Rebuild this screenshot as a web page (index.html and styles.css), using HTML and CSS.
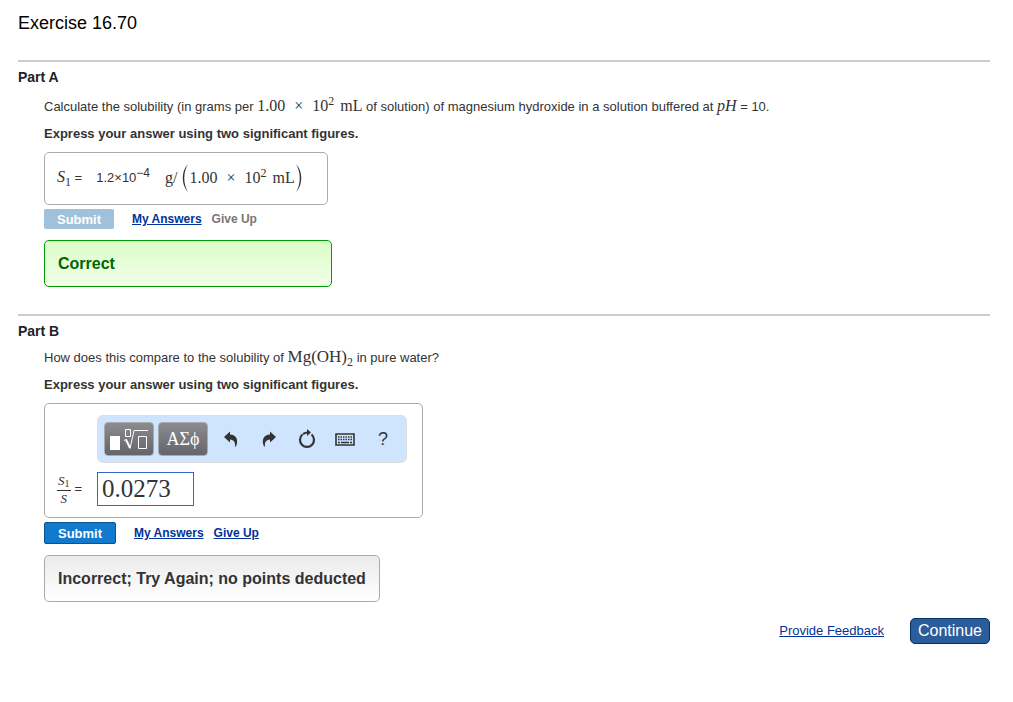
FILE: index.html
```html
<!DOCTYPE html>
<html lang="en">
<head>
    <meta charset="UTF-8">
    <title>Exercise 16.70</title>
    <link rel="stylesheet" href="styles.css">
</head>
<body>
    <h1 class="title">Exercise 16.70</h1>

    <section class="part">
        <h2 class="part-title">Part A</h2>
        <div class="part-body">
            <p class="question with-exponent">Calculate the solubility (in grams per <span class="math">1.00<span class="times">×</span>10<sup>2</sup><span class="unit">mL</span></span> of solution) of magnesium hydroxide in a solution buffered at <i class="math">pH</i> = 10.</p>
            <p class="instructions">Express your answer using two significant figures.</p>
            <div class="answer answer-done">
                <span><span class="math"><i>S</i><sub>1</sub></span> =</span>
                <span class="value">1.2×10<sup>−4</sup></span>
                <span class="math units"><span class="per">g/</span><svg class="paren" viewBox="0 0 8 30"><path d="M7 1C0 8 0 22 7 29C2 21 2 9 7 1Z"/></svg><span>1.00<span class="times">×</span>10<sup>2</sup><span class="unit">mL</span></span><svg class="paren" viewBox="0 0 8 30"><path d="M1 1C8 8 8 22 1 29C6 21 6 9 1 1Z"/></svg></span>
            </div>
            <div class="actions">
                <button class="submit" disabled>Submit</button>
                <a href="#">My Answers</a>
                <span class="disabled-link">Give Up</span>
            </div>
            <div class="feedback correct">Correct</div>
        </div>
    </section>

    <section class="part">
        <h2 class="part-title">Part B</h2>
        <div class="part-body">
            <p class="question">How does this compare to the solubility of <span class="math formula">Mg(OH)<sub>2</sub></span> in pure water?</p>
            <p class="instructions">Express your answer using two significant figures.</p>
            <div class="answer answer-open">
                <div class="toolbar">
                    <button class="tool" aria-label="Templates">
                        <svg width="38" height="22" viewBox="0 0 38 22">
                            <path d="M0 8h10v14H0z" fill="#fff"/>
                            <path d="M15.500 1.500h5v7h-5zM28.500 8.500h8v12h-8z" fill="none" stroke="#fff"/>
                            <path d="M16 11.500l4 8.500" fill="none" stroke="#fff" stroke-width="2"/>
                            <path d="M14 12.500l2-1M20 20.500L24 2.500H38" fill="none" stroke="#fff"/>
                        </svg>
                    </button>
                    <button class="tool">ΑΣϕ</button>
                    <button class="icon" aria-label="Undo">
                        <svg width="16" height="16" viewBox="0 0 16 16"><path d="M1 6L7 0.500V3.500C13 3.500 16 9 13 15.500H12C12.500 11 11 9 7 8.500V11.500Z" fill="#333"/></svg>
                    </button>
                    <button class="icon" aria-label="Redo">
                        <svg width="16" height="16" viewBox="0 0 16 16"><path d="M15 6L9 0.500V3.500C3 3.500 0 9 3 15.500H4C3.500 11 5 9 9 8.500V11.500Z" fill="#333"/></svg>
                    </button>
                    <button class="icon" aria-label="Reset">
                        <svg width="18" height="20" viewBox="0 0 18 20"><path d="M13.500 5.500A7 7 0 1 1 4.500 5.500M5 5.200C6.500 4 8 3.500 10 3.500" fill="none" stroke="#333" stroke-width="2.200"/><path d="M9 0L13 3.500 9 7Z" fill="#333"/></svg>
                    </button>
                    <button class="icon" aria-label="Keyboard">
                        <svg width="20" height="13" viewBox="0 0 20 13">
                            <path d="M1 1h18v11H1z" fill="none" stroke="#333" stroke-width="1.600"/>
                            <path d="M3 4h14M3 6.500h14" stroke="#333" stroke-width="1.500" stroke-dasharray="1.500 1"/>
                            <path d="M3 9.500h2M6 9.500h8M15 9.500h2" stroke="#333" stroke-width="1.500"/>
                        </svg>
                    </button>
                    <button class="icon help">?</button>
                </div>
                <label class="ratio" for="answer-b">
                    <span class="fraction"><span class="top"><i>S</i><sub>1</sub></span><i>S</i></span>
                    <span>=</span>
                </label>
                <input class="entry" id="answer-b" type="text" value="0.0273">
            </div>
            <div class="actions">
                <button class="submit">Submit</button>
                <a href="#">My Answers</a>
                <a href="#">Give Up</a>
            </div>
            <div class="feedback incorrect">Incorrect; Try Again; no points deducted</div>
        </div>
    </section>

    <footer class="footer">
        <a href="#">Provide Feedback</a>
        <button class="continue">Continue</button>
    </footer>
</body>
</html>
```
FILE: styles.css
```css
body {
    margin: 0;
    padding: 12px 23px 20px 18px;
    background: #fff;
    color: #333;
    font-family: "Liberation Sans", Arial, sans-serif;
    font-size: 13px;
    line-height: 16px;
}

button {
    font-family: inherit;
    cursor: pointer;
}

a {
    color: #039;
}

sup,
sub {
    font-size: 12px;
    line-height: 0;
}

.title {
    margin: 0 0 26px;
    color: #000;
    font-size: 18px;
    font-weight: normal;
    line-height: 22px;
}

.part {
    border-top: 2px solid #ccc;
    padding-top: 7px;
    margin-bottom: 27px;
}

.part-title {
    margin: 0 0 10px;
    color: #222;
    font-size: 14px;
    line-height: 16px;
}

.part-body {
    display: flex;
    flex-direction: column;
    align-items: flex-start;
    padding-left: 26px;
}

.question {
    margin: 0 0 10px;
    line-height: 18px;
}

.with-exponent {
    padding-top: 3px;
}

.instructions {
    margin: 0 0 10px;
    font-weight: bold;
}

.math {
    font-family: "Liberation Serif", "Times New Roman", serif;
    font-size: 16px;
    line-height: 16px;
}

.formula {
    font-size: 17px;
}

.times {
    margin: 0 9px;
}

.unit {
    margin-left: 6px;
}

.answer {
    box-sizing: border-box;
    border: 1px solid #aaa;
    border-radius: 5px;
}

.answer-done {
    display: flex;
    align-items: center;
    gap: 14px;
    height: 53px;
    padding: 0 24px 2px 12px;
}

.units {
    display: flex;
    align-items: center;
}

.per {
    margin: 0 4px 0 1px;
}

.paren {
    width: 8px;
    height: 30px;
    fill: #333;
}

.answer-open {
    display: grid;
    grid-template-columns: 40px 310px;
    row-gap: 9px;
    padding: 11px 15px 11px 12px;
}

.toolbar {
    grid-column: 2;
    box-sizing: border-box;
    display: flex;
    align-items: center;
    height: 48px;
    padding: 0 0 0 6px;
    border: 1px solid #ddd;
    border-radius: 6px;
    background: #cfe5ff;
}

.tool {
    display: flex;
    align-items: center;
    justify-content: center;
    width: 50px;
    height: 34px;
    margin-right: 4px;
    padding: 0;
    border: 1px solid #aaa;
    border-radius: 4px;
    background: linear-gradient(#8c8b90, #656569);
    color: #fff;
    font-family: "Liberation Serif", "Times New Roman", serif;
    font-size: 18px;
}

.icon {
    display: flex;
    align-items: center;
    justify-content: center;
    width: 38px;
    height: 34px;
    padding: 0;
    border: 0;
    background: none;
    color: #333;
}

.help {
    font-size: 18px;
}

.ratio {
    display: flex;
    align-items: center;
    gap: 4px;
}

.fraction {
    display: flex;
    flex-direction: column;
    align-items: center;
    font-family: "Liberation Serif", "Times New Roman", serif;
    font-size: 13px;
    line-height: 15px;
}

.fraction sub {
    font-size: 10px;
    vertical-align: -2px;
}

.top {
    padding: 0 1px 2px;
    border-bottom: 1px solid #333;
}

.entry {
    box-sizing: border-box;
    width: 97px;
    height: 34px;
    padding: 0 4px;
    border: 1px solid #36c;
    color: #333;
    font-family: "Liberation Serif", "Times New Roman", serif;
    font-size: 25px;
}

.actions {
    display: flex;
    align-items: center;
    margin: 4px 0 11px;
    font-size: 12px;
    font-weight: bold;
    gap: 10px;
}

.submit {
    width: 72px;
    height: 22px;
    margin-right: 8px;
    padding: 0;
    border: 1px solid #0a5591;
    border-radius: 2px;
    background: #117acc;
    color: #fff;
    font-size: 13px;
    font-weight: bold;
}

.submit:disabled {
    width: 70px;
    height: 20px;
    border: 0;
    background: #9fc1dc;
    cursor: default;
}

.disabled-link {
    color: #777;
}

.feedback {
    box-sizing: border-box;
    min-width: 288px;
    padding: 13px;
    border: 1px solid #aaa;
    border-radius: 5px;
    font-size: 16px;
    font-weight: bold;
    line-height: 19px;
}

.correct {
    border-color: #090;
    background: linear-gradient(#dcfdc8, #f2fee9);
    color: #060;
}

.incorrect {
    background: linear-gradient(#ebebeb, #fff);
}

.footer {
    display: flex;
    align-items: center;
    justify-content: flex-end;
    gap: 26px;
    margin-top: -11px;
}

.continue {
    width: 80px;
    height: 26px;
    padding: 0;
    border: 1px solid #036;
    border-radius: 5px;
    background: #2b5c9b;
    color: #fff;
    font-size: 16px;
}
```
